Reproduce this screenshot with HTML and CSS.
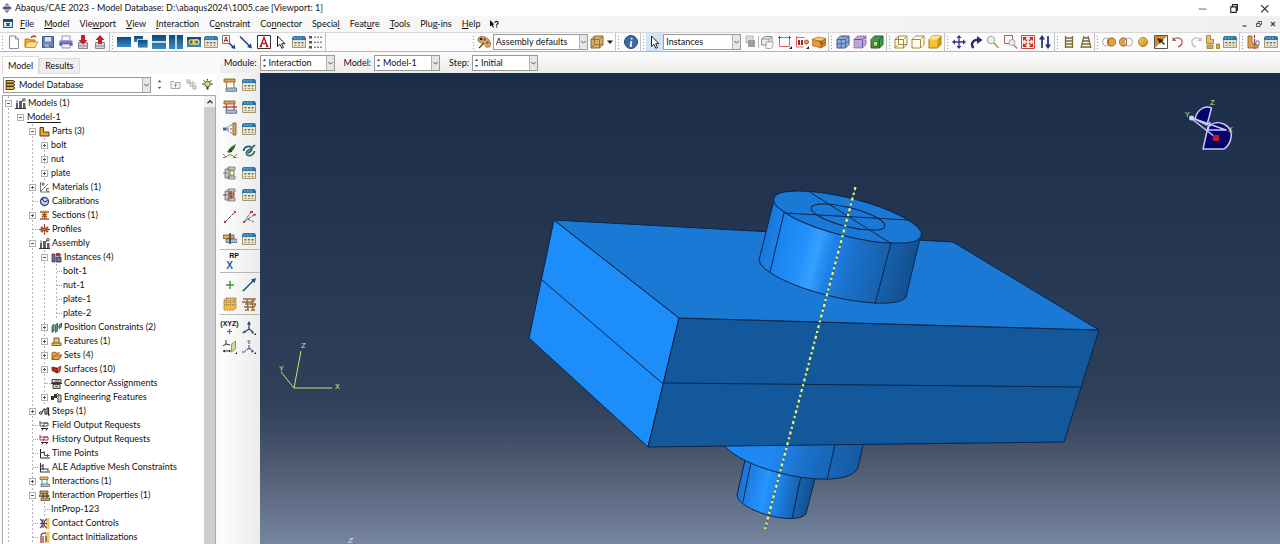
FILE: index.html
```html
<!DOCTYPE html>
<html lang="en">
<head>
<meta charset="utf-8">
<title>Abaqus/CAE 2023</title>
<link rel="stylesheet" href="styles.css">
</head>
<body>
<svg class="sprite" aria-hidden="true">
  <defs>
    <linearGradient id="g-win" x1="0" y1="0" x2="0" y2="1"><stop offset="0" stop-color="#0f4678"/><stop offset="1" stop-color="#3a8cc4"/></linearGradient>
    <linearGradient id="g-gold" x1="0" y1="0" x2="1" y2="1"><stop offset="0" stop-color="#ffd36a"/><stop offset="1" stop-color="#c9851a"/></linearGradient>
  </defs>
  <symbol id="logo" viewBox="0 0 12 12"><path d="M6 0l3 3H3zM6 12l3-3H3z" fill="#6a6f9c"/><path d="M0 6l3-2h6l3 2-3 2H3z" fill="#54598c"/><path d="M3 3h6v1H3zM3 8h6v1H3z" fill="#b9bcd8"/></symbol>
  <symbol id="mdi" viewBox="0 0 10 10"><path d="M.5.5h9v8h-9z" fill="#dce9f6" stroke="#1f4d7a"/><path d="M0 0h10v3H0z" fill="#1c4c7c"/><path d="M3 4h4v1H6l1 2H3l1-2H3z" fill="#1c4c7c"/></symbol>
  <symbol id="helpcur" viewBox="0 0 10 10"><path d="M0 0l5 5H3l1.500 3-1 .5L2 6 0 7z" fill="#111"/><path d="M5.500 3c0-2 3.500-2 3.500 0 0 1.500-1.700 1.300-1.700 3M7.300 7v1.400" fill="none" stroke="#111" stroke-width="1.300"/></symbol>
  <symbol id="chev" viewBox="0 0 8 8"><path d="M1.500 2.800L4 5.300l2.500-2.500" fill="none" stroke="#444" stroke-width="1"/></symbol>
  <symbol id="chev-up" viewBox="0 0 8 8"><path d="M1.500 5.200L4 2.700l2.500 2.500" fill="none" stroke="#333" stroke-width="1.300"/></symbol>
  <symbol id="spin" viewBox="0 0 6 12"><path d="M3 1l2 2.500H1zM3 11l2-2.500H1z" fill="#555"/></symbol>

  <symbol id="new" viewBox="0 0 14 14"><path d="M2.500 1h6l3 3v9.500h-9z" fill="#fff" stroke="#8e8e96"/><path d="M8.500 1v3h3" fill="#ddd" stroke="#8e8e96"/></symbol>
  <symbol id="open" viewBox="0 0 14 14"><path d="M1 12V4h4l1 1h5v7z" fill="#e9a93a" stroke="#b57814"/><path d="M1 12.500L4 7h10l-3 5.500z" fill="#ffe08a" stroke="#c58a1e" stroke-width=".8"/><path d="M7 3c1-2 3-2.500 5-1" stroke="#d33" fill="none" stroke-width="1.500"/></symbol>
  <symbol id="save" viewBox="0 0 14 14"><path d="M1.500 1.500h11v11h-11z" fill="#6d86b5" stroke="#3e5584"/><path d="M4 2h6v4.500H4z" fill="#d5dff0"/><path d="M4 9h6v3.500H4z" fill="#a3b1cc"/><path d="M8 9.500h1.500V12H8z" fill="#3e5584"/></symbol>
  <symbol id="print" viewBox="0 0 14 14"><path d="M3 1h8v5H3z" fill="#fff" stroke="#7b7bb0" stroke-width=".8"/><path d="M.5 5.500h13v5H.5z" fill="#7d7cc0"/><path d="M.5 8h13v2.500H.5z" fill="#5b5a9d"/><path d="M3 9h8v4H3z" fill="#eef" stroke="#7b7bb0" stroke-width=".8"/></symbol>
  <symbol id="import" viewBox="0 0 14 14"><path d="M2.500 7.500h9v6h-9z" fill="#d9d4d4" stroke="#8d8585"/><path d="M3 11h8" stroke="#8d8585"/><path d="M5 0h4v5h2.500L7 9.500 2.500 5H5z" fill="#c41e28"/></symbol>
  <symbol id="export" viewBox="0 0 14 14"><path d="M2.500 7.500h9v6h-9z" fill="#d9d4d4" stroke="#8d8585"/><path d="M3 11h8" stroke="#8d8585"/><path d="M5 9h4V5h2.500L7 0 2.500 5H5z" fill="#c41e28"/></symbol>
  <symbol id="win" viewBox="0 0 14 14"><path d="M0 2h14v10H0z" fill="url(#g-win)"/></symbol>
  <symbol id="cascade" viewBox="0 0 14 14"><path d="M0 1h9v6H0z" fill="url(#g-win)"/><path d="M3.500 4.500h10.500v8.500H3.500z" fill="url(#g-win)" stroke="#fff" stroke-width=".7"/></symbol>
  <symbol id="tileh" viewBox="0 0 14 14"><path d="M0 0h14v6.300H0zM0 7.700h14V14H0z" fill="url(#g-win)"/></symbol>
  <symbol id="tilev" viewBox="0 0 14 14"><path d="M0 0h6.300v14H0zM7.700 0H14v14H7.700z" fill="url(#g-win)"/></symbol>
  <symbol id="link" viewBox="0 0 14 14"><path d="M0 2h14v10H0z" fill="url(#g-win)"/><ellipse cx="5" cy="7" rx="3" ry="2.200" fill="none" stroke="#f3b32f" stroke-width="1.400"/><ellipse cx="9" cy="7" rx="3" ry="2.200" fill="none" stroke="#ffd56b" stroke-width="1.400"/></symbol>
  <symbol id="mgr" viewBox="0 0 14 14"><path d="M.5 4h13v8.500H.5z" fill="#ece4c8" stroke="#a89768"/><path d="M1.500 1h11l1.500 1.500V5H0V2.500z" fill="#2b78a8"/><path d="M2 3h1.500M5 3h1.500M8 3h1.500" stroke="#9fd2ee"/><path d="M2.500 7.800h2M6 7.800h2M9.500 7.800h2" stroke="#4f748c" stroke-width="1.600"/><path d="M2.500 10.500h2M6 10.500h2M9.500 10.500h2" stroke="#9a9a84"/></symbol>
  <symbol id="annot" viewBox="0 0 14 14"><path d="M.5.500h7v8h-7z" fill="#fff" stroke="#555" stroke-width=".8"/><path d="M2 7l2-5 2 5M2.700 5.500h2.600" stroke="#b3202b" fill="none"/><path d="M7 8l4 4" stroke="#1d3f86" stroke-width="1.500"/><path d="M13.500 14l-1-4.500-3.500 3.500z" fill="#1d3f86"/></symbol>
  <symbol id="arrow" viewBox="0 0 14 14"><path d="M1 1.500l9 9" stroke="#1d3f86" stroke-width="1.500"/><path d="M13 13.500L11.800 8.500 8 12z" fill="#1d3f86"/></symbol>
  <symbol id="text" viewBox="0 0 14 14"><path d="M.5.500h13v13H.5z" fill="#fff" stroke="#333"/><path d="M3.500 11.500L7 2.500l3.500 9M5 8.500h4M2.500 11.500h2.500M9 11.500h2.500" fill="none" stroke="#b3202b" stroke-width="1.500"/></symbol>
  <symbol id="cursor" viewBox="0 0 14 14"><path d="M3.500 1v10.500L6 9.300l1.800 4 1.700-.8-1.800-3.800h3.300z" fill="#fff" stroke="#222" stroke-width="1"/></symbol>
  <symbol id="list" viewBox="0 0 14 14"><path d="M0 1h3v2.500H0zM0 6h3v2.500H0zM0 11h3v2.500H0z" fill="#555"/><path d="M5 2.200h9M5 7.200h9M5 12.200h9" stroke="#555" stroke-dasharray="2 1"/></symbol>
  <symbol id="palette" viewBox="0 0 14 14"><path d="M1 4c1-4 8-3 11 1s2 8-3 7c-1-.5 0-2-1.500-3S0 8 1 4z" fill="#d9a765" stroke="#81571f" stroke-width=".7"/><circle cx="4" cy="4" r="1.300" fill="#222"/><circle cx="7.500" cy="4.500" r="1.200" fill="#c22"/><circle cx="10.500" cy="7.500" r="1.200" fill="#2a7a35"/><path d="M2 13l5-5" stroke="#5c3b14" stroke-width="1.300"/></symbol>
  <symbol id="cube-br" viewBox="0 0 14 14"><path d="M1 4.500L4.500 1H13v8.500L9.500 13H1z" fill="#d3b068" stroke="#8a6a2a"/><path d="M1 4.500h8.500V13M9.500 4.500L13 1M4.500 1v8.500H13M4.500 9.500L1 13" stroke="#8a6a2a" fill="none" stroke-width=".8"/></symbol>
  <symbol id="info" viewBox="0 0 14 14"><circle cx="7" cy="7" r="6.500" fill="#3a6aa8" stroke="#24497c"/><path d="M7.800 2.800l-.3 1.500M7.500 6l-1 5h1.500" stroke="#fff" stroke-width="1.700" fill="none"/></symbol>
  <symbol id="shapes" viewBox="0 0 14 14"><path d="M3 1h7v7H3z" fill="#ddd" stroke="#aaa" stroke-width=".8"/><path d="M5 5h7v7H5z" fill="#9d9d9d"/></symbol>
  <symbol id="cubegrey" viewBox="0 0 14 14"><path d="M.5 4L4 1.500h7V7L8 10H.5zM.5 4H8v6M8 4l3-2.500" fill="#eee" stroke="#8f8f8f"/><path d="M5 7h7v4l-2 2.500H5z" fill="#f5f5f5" stroke="#999" stroke-width=".8"/></symbol>
  <symbol id="selrect" viewBox="0 0 14 14"><path d="M1.500 2.500h10v9h-10z" fill="none" stroke="#cf6a6e"/><path d="M0 2.500h3M1.500 1v3M10 2.500h3M11.500 1v3" stroke="#b4343c"/><path d="M14 14v-3l-3 3z" fill="#222"/></symbol>
  <symbol id="selpts" viewBox="0 0 14 14"><path d="M1.500 2.500h8M1.500 1v11h7" fill="none" stroke="#cf6a6e"/><path d="M3 5h2v5H3zM6 5h2v5H6z" fill="#a82a1c"/><circle cx="11.500" cy="7" r="2" fill="#e9a54a" stroke="#a8531c"/><path d="M14 14v-3l-3 3z" fill="#222"/></symbol>
  <symbol id="box" viewBox="0 0 14 14"><path d="M0 4.500L6 2l8 1.500-5 3z" fill="#f7c873" stroke="#935a12" stroke-width=".6"/><path d="M0 4.500l9 2V13l-9-2.500z" fill="#e39a35" stroke="#935a12" stroke-width=".6"/><path d="M9 6.500l5-3V10l-5 3z" fill="#c97e20" stroke="#935a12" stroke-width=".6"/><path d="M7 6l4 3" stroke="#5c3b14"/></symbol>
  <symbol id="cube-blue" viewBox="0 0 14 14"><path d="M1 4.500L4.500 1H13v8.500L9.500 13H1z" fill="#8fabda" stroke="#3f5792"/><path d="M1 4.500h8.500V13M9.500 4.500L13 1M1 8.700h8.500L13 5.200M5.200 4.500V13M7 2.700L9 1" stroke="#3f5792" fill="none" stroke-width=".8"/></symbol>
  <symbol id="cube-pur" viewBox="0 0 14 14"><path d="M1 4.500L4.500 1H13v8.500L9.500 13H1z" fill="#b9a7dc" stroke="#a1426c" stroke-dasharray="1.500 1"/><path d="M1 4.500h8.500V13M9.500 4.500L13 1" stroke="#6d5aa6" fill="none"/></symbol>
  <symbol id="cube-grn" viewBox="0 0 14 14"><path d="M1 4.500L4.500 1H13v8.500L9.500 13H1z" fill="#43964d" stroke="#1e5c2a"/><path d="M3.500 6.500h4V11h-4z" fill="#e6d28a" stroke="#1e5c2a" stroke-width=".7"/><path d="M9.500 4.500L13 1M9.500 4.500V13" stroke="#1e5c2a"/></symbol>
  <symbol id="cube-wire" viewBox="0 0 14 14"><path d="M1 4.500L4.500 1H13v8.500L9.500 13H1zM1 4.500h8.500V13M9.500 4.500L13 1M4.500 1v8.500H13M4.500 9.500L1 13" stroke="#a88a35" fill="none"/></symbol>
  <symbol id="cube-hid" viewBox="0 0 14 14"><path d="M1 4.500L4.500 1H13v8.500L9.500 13H1zM1 4.500h8.500V13M9.500 4.500L13 1" stroke="#a88a35" fill="#fffdf3"/></symbol>
  <symbol id="cube-sol" viewBox="0 0 14 14"><path d="M1 4.500L4.500 1H13v8.500L9.500 13H1z" fill="#f5c431" stroke="#a17a10"/><path d="M1 4.500L4.500 1H13L9.500 4.500z" fill="#fde68e"/><path d="M9.500 4.500L13 1v8.500L9.500 13z" fill="#c9930f"/></symbol>
  <symbol id="pan" viewBox="0 0 14 14"><path d="M7 2v10M2 7h10" stroke="#34357f" stroke-width="1.300"/><path d="M7 0l2.500 3h-5zM7 14l2.500-3h-5zM0 7l3-2.500v5zM14 7l-3-2.500v5z" fill="#34357f"/></symbol>
  <symbol id="rotate" viewBox="0 0 14 14"><path d="M4.500 13C1 9 4 4.500 9 5" fill="none" stroke="#26286f" stroke-width="2.300"/><path d="M8 1l5.500 4L8 9z" fill="#26286f"/></symbol>
  <symbol id="mag" viewBox="0 0 14 14"><path d="M7.500 7.500L12.500 13" stroke="#b89c61" stroke-width="1.800"/><circle cx="5" cy="5" r="3.800" fill="#e9ecef" stroke="#a5a9ad"/></symbol>
  <symbol id="magbox" viewBox="0 0 14 14"><path d="M.5.500h8v8h-8z" fill="none" stroke="#a55a68"/><path d="M9.500 9.500L13 13.500" stroke="#b89c61" stroke-width="1.800"/><circle cx="8" cy="7.500" r="3" fill="#e9ecef" stroke="#a5a9ad"/></symbol>
  <symbol id="fit" viewBox="0 0 14 14"><path d="M.5.500h13v13H.5z" fill="#fde9e6" stroke="#cf4338"/><path d="M2 2h4L2 6zM12 2v4L8 2zM2 12V8l4 4zM12 12H8l4-4z" fill="#c6281f"/><path d="M3 3l3 3M11 3L8 6M3 11l3-3M11 11L8 8" stroke="#c6281f" stroke-width="1.300"/></symbol>
  <symbol id="updown" viewBox="0 0 14 14"><path d="M4 3v10M10 1v10" stroke="#26286f" stroke-width="1.700"/><path d="M4 0l3 4.500H1zM10 14l3-4.500H7z" fill="#26286f"/></symbol>
  <symbol id="ladder" viewBox="0 0 14 14"><path d="M3.500 1v12M10.500 1v12M3 3h8M3 6h8M3 9h8M3 12h8" stroke="#7c6a39" stroke-width="1.300"/></symbol>
  <symbol id="ladder2" viewBox="0 0 14 14"><path d="M5 1L2 13M9 1l3 12M4.500 3h5M4 6h6M3 9h8M2 12h10" stroke="#7c6a39" stroke-width="1.300"/></symbol>
  <symbol id="venn1" viewBox="0 0 14 14"><circle cx="4.500" cy="7" r="4" fill="#fff" stroke="#9a8d6e" stroke-width=".8"/><circle cx="9.500" cy="7" r="4.200" fill="#e3a13a" stroke="#8a5c12" stroke-width=".8"/><path d="M6.500 4v6" stroke="#8a5c12" stroke-width=".8"/></symbol>
  <symbol id="venn2" viewBox="0 0 14 14"><circle cx="4.500" cy="7" r="4.200" fill="#e3a13a" stroke="#8a5c12" stroke-width=".8"/><circle cx="9.500" cy="7" r="4" fill="#fff" stroke="#8c93a6" stroke-width=".8"/><path d="M7.500 4v6" stroke="#8a5c12" stroke-width=".8"/></symbol>
  <symbol id="ball" viewBox="0 0 14 14"><circle cx="7" cy="7" r="4.500" fill="url(#g-gold)" stroke="#a56c14" stroke-width=".8"/></symbol>
  <symbol id="pick" viewBox="0 0 14 14"><path d="M.5.500h13v13H.5z" fill="#fff" stroke="#555"/><path d="M1 1h12L1 13z" fill="#d98a25"/><path d="M3 3l7 2-2 1 3 3-1 1-3-3-1 2z" fill="#222"/></symbol>
  <symbol id="undo" viewBox="0 0 14 14"><path d="M2.500 4.500C7 1 12 4 11 8c-.5 2-2 3.500-4 4" fill="none" stroke="#a15a5c" stroke-width="1.200"/><path d="M1.500 2v4h4z" fill="#a15a5c"/></symbol>
  <symbol id="redo" viewBox="0 0 14 14"><path d="M11.500 4.500C7 1 2 4 3 8c.5 2 2 3.500 4 4" fill="none" stroke="#b9b9b9" stroke-width="1.200"/><path d="M12.500 2v4h-4z" fill="#b9b9b9"/></symbol>
  <symbol id="tree" viewBox="0 0 14 14"><path d="M.5.500h4v4h3v4h-7z" fill="#e2c271" stroke="#9a7a2a" stroke-width=".8"/><path d="M1 10h6v3.500H1zM10.500 9h3v4.500h-3z" fill="#d9a54a" stroke="#9a7a2a" stroke-width=".8"/></symbol>
  <symbol id="cut" viewBox="0 0 14 14"><path d="M1 1h4v7h6v5H1z" fill="#d9a050" stroke="#8a5c22" stroke-width=".8"/><path d="M9 6h3v4H9z" fill="#fff" stroke="#5a68a8" stroke-width=".9"/><path d="M7.500 0v14" stroke="#c2262c" stroke-width="1.200" stroke-dasharray="3 1"/></symbol>

  <symbol id="db" viewBox="0 0 11 11"><path d="M1 1.500h7l2 1.500-2 1H1zM1 4.500h7l2 1.500-2 1H1zM1 7.500h7l2 1.500-2 1.500H1z" fill="#e0b440" stroke="#3b2d0b" stroke-width=".9"/></symbol>
  <symbol id="folderup" viewBox="0 0 11 11"><path d="M1 2.500h3l1 1h5v6H1z" fill="#f4f4f4" stroke="#a9a9a9"/><path d="M5.500 8.500V5M4 6.300L5.500 5 7 6.300" fill="none" stroke="#999"/></symbol>
  <symbol id="chain" viewBox="0 0 11 11"><path d="M1 1h3v3H1zM4 4h3v3H4zM7 7h3v3H7z" fill="#eee" stroke="#a9a9a9"/><path d="M6 2l4 3" stroke="#bbb"/></symbol>
  <symbol id="bulb" viewBox="0 0 11 11"><path d="M5.500 0v1.500M0 5h2M9 5h2M1.500 1.500l1.500 1M9.500 1.500L8 2.500" stroke="#333"/><circle cx="5.500" cy="5" r="2.800" fill="#d6dd6a" stroke="#4b5215" stroke-width=".9"/><path d="M4.500 8h2v2.500h-2z" fill="#333"/></symbol>

  <symbol id="t-asm" viewBox="0 0 11 11"><path d="M1 5h2v5H1zM4 3h3v7H4zM8 5h2.500v5H8z" fill="#556070"/><path d="M2 2.500v2M8.500 1l-2 3" stroke="#333"/><circle cx="9" cy="1.800" r="1.300" fill="#fff" stroke="#222" stroke-width=".8"/><path d="M0 10.500h11" stroke="#333"/></symbol>
  <symbol id="t-part" viewBox="0 0 11 11"><path d="M1 1.500h3.500v4.500H10v4H1z" fill="#dfa83a" stroke="#5a3d0b"/></symbol>
  <symbol id="t-mat" viewBox="0 0 11 11"><path d="M1.500 0v10H11M2 9l7-7" stroke="#777" fill="none"/><path d="M3 1h2v2H3zM10 6.500H7.500v2.500H10" stroke="#444" stroke-width=".8" fill="none"/></symbol>
  <symbol id="t-cal" viewBox="0 0 11 11"><circle cx="5.500" cy="5.500" r="4" fill="#c9d4ee" stroke="#3b4780" stroke-width="1.400"/><path d="M5.500 6L3 2.500M5.500 6l3-1.500" stroke="#222"/></symbol>
  <symbol id="t-sec" viewBox="0 0 11 11"><path d="M1 2h9M1 9h9M5.500 2v7M3 4l5 3M8 4L3 7" stroke="#9a5a24" stroke-width="1.600"/><path d="M3 1h5" stroke="#e3a13a"/></symbol>
  <symbol id="t-prof" viewBox="0 0 11 11"><path d="M5.500 0v11M0 5.500h11" stroke="#9f3c20"/><path d="M2 3h2v5H2zM7 3h2v5H7zM4 4.500h3v2H4z" fill="#cf7446" stroke="#8e3d1d" stroke-width=".6"/></symbol>
  <symbol id="t-inst" viewBox="0 0 11 11"><path d="M1 2h3v8H1zM5 5h5v5H5z" fill="#6e7896" stroke="#2f3550" stroke-width=".8"/><path d="M5 1h4v3H5z" fill="#b43444"/><path d="M7 7l3-5" stroke="#b43444"/></symbol>
  <symbol id="t-pos" viewBox="0 0 11 11"><path d="M1 4l2-2v7l-2 1.500zM4.500 3l2-2v8l-2 1.500zM8 3l2.500-2v4L8 6.500z" fill="#5c9a76" stroke="#22553a" stroke-width=".8"/></symbol>
  <symbol id="t-feat" viewBox="0 0 11 11"><path d="M1 9.500V7h2V2h5v5h2v2.500z" fill="#e5c176" stroke="#7c5c20"/><path d="M3 7h5" stroke="#7c5c20"/></symbol>
  <symbol id="t-set" viewBox="0 0 11 11"><path d="M1 9.500V3l3-1 1 1h4" fill="#f0b840" stroke="#8e5a14" stroke-width=".9"/><path d="M1 9.500L3.500 5H11L8 9.500z" fill="#e79b3a" stroke="#a5421c" stroke-width=".9"/></symbol>
  <symbol id="t-surf" viewBox="0 0 11 11"><path d="M1 3l5 1v5L1 6.500z" fill="#b4281e" stroke="#64140e" stroke-width=".7"/><path d="M6.500 4L10 2 9 7.500 6.500 9z" fill="#d25a34" stroke="#64140e" stroke-width=".7"/></symbol>
  <symbol id="t-conn" viewBox="0 0 11 11"><path d="M1 1.500h9v3H1zM2 6.500h7v4H2z" fill="#cfd6c4" stroke="#333" stroke-width=".9"/><path d="M0 5.500h11" stroke="#333"/><path d="M4 3h4M4 8.500h3" stroke="#76602a"/></symbol>
  <symbol id="t-eng" viewBox="0 0 11 11"><path d="M0 4h3v4H0zM3 2h3v4H3z" fill="#333"/><path d="M7 3h3v7H7z" fill="#e8d8a0" stroke="#333" stroke-width=".9"/><path d="M6 1l2 2" stroke="#333"/></symbol>
  <symbol id="t-step" viewBox="0 0 11 11"><circle cx="1.800" cy="7" r="1.300" fill="#fff" stroke="#222"/><path d="M3 6l2-3h1v5h2V2h1.500v7H11" fill="none" stroke="#222" stroke-width="1.100"/></symbol>
  <symbol id="t-field" viewBox="0 0 11 11"><path d="M1 1v5h4V3h4M1 3h8v3H3" fill="none" stroke="#555"/><path d="M2 8.500h7M3 10.500l1-1.500M7 10.500l1-1.500" stroke="#222"/></symbol>
  <symbol id="t-hist" viewBox="0 0 11 11"><path d="M1 1v5h4V3h4M1 3h8v3H3" fill="none" stroke="#a33a4a"/><path d="M2 8.500h7M3 10.500l1-1.500M7 10.500l1-1.500" stroke="#222"/></symbol>
  <symbol id="t-time" viewBox="0 0 11 11"><path d="M1.500 1v9H11" fill="none" stroke="#222"/><path d="M1.500 4.500h4v3h5M5 3v3M8.500 6v3" fill="none" stroke="#555"/></symbol>
  <symbol id="t-ale" viewBox="0 0 11 11"><path d="M1.500 1v9H11M4 2v6M1.500 4H4M1.500 7H9v2" fill="none" stroke="#334" stroke-width="1.100"/></symbol>
  <symbol id="t-int" viewBox="0 0 11 11"><path d="M1 1h8v2.500H1z" fill="#e6bc62" stroke="#755619" stroke-width=".7"/><path d="M3 3.500V8M8 3.500V8" stroke="#3a9a8a"/><path d="M2 8h8.500v2.500H2z" fill="#b7c6d4" stroke="#4c5d70" stroke-width=".7"/></symbol>
  <symbol id="t-intp" viewBox="0 0 11 11"><path d="M1 1h8v2.500H1zM0 5h10v1.500H0z" fill="#d6a33d" stroke="#4a3710" stroke-width=".7"/><path d="M4 3.500V8M8 3.500V8" stroke="#333"/><path d="M2 8h8.500v2.500H2z" fill="#c4b377" stroke="#4a3710" stroke-width=".7"/></symbol>
  <symbol id="t-cc" viewBox="0 0 11 11"><path d="M7 0h3.500v11H7z" fill="#e8c86a"/><path d="M1 1l2 2v5l-2 2M4 1v9M7.500 1l-2 2v5l2 2M1 5.500h7" fill="none" stroke="#5e3f70" stroke-width="1.100"/></symbol>
  <symbol id="t-ci" viewBox="0 0 11 11"><path d="M6 0h4.500v11H6z" fill="#e8c86a"/><path d="M2 4v7M4 4v7M2 4c0-3 3-3 5-3" fill="none" stroke="#8e2f2a" stroke-width="1.200"/><path d="M7 4v6" stroke="#4a3710"/></symbol>

  <symbol id="b-int" viewBox="0 0 14 14"><path d="M1 1h11v3H1z" fill="#dca65a" stroke="#7d5418" stroke-width=".8"/><path d="M3.500 4v6M11 4v6" stroke="#a8872e" stroke-width="1.200"/><path d="M3 10h10.500v3.300H3z" fill="#a9bcd4" stroke="#516782" stroke-width=".8"/></symbol>
  <symbol id="b-intp" viewBox="0 0 14 14"><path d="M1 1h11v3H1z" fill="#dca65a" stroke="#7d5418" stroke-width=".8"/><path d="M3.500 4v6M11 4v6" stroke="#8a5a2e" stroke-width="1.200"/><path d="M0 7h14" stroke="#c2262c" stroke-width="1.300"/><path d="M3 10h10.500v3.300H3z" fill="#a9bcd4" stroke="#516782" stroke-width=".8"/></symbol>
  <symbol id="b-cons" viewBox="0 0 14 14"><path d="M10 1h3v12h-3z" fill="#dca65a" stroke="#7d5418" stroke-width=".8"/><path d="M2 7l8-5M2 7l8 5M1 7h8" stroke="#555" stroke-width=".9" stroke-dasharray="2 1" fill="none"/><path d="M0 5.500h3.500v3H0z" fill="#3c6f9c"/></symbol>
  <symbol id="b-find" viewBox="0 0 14 14"><path d="M4 8l4-5 5-3-2 5-4 4z" fill="#2d6b2b"/><path d="M6 5l3 3" stroke="#111"/><path d="M0 10l3 3 2-2h4l2 2 3-3M0 13.500h3M10 13.500h4" stroke="#8a8540" fill="none"/></symbol>
  <symbol id="b-swirl" viewBox="0 0 14 14"><path d="M1.500 7C2 2.500 8 1 9.500 4c.8 2-1 4-4 5" fill="none" stroke="#2d5878" stroke-width="1.800"/><path d="M12.500 7c-.5 4.500-6.500 6-8 3-.8-2 1-4 4-5L13 1" fill="none" stroke="#3f7068" stroke-width="1.800"/></symbol>
  <symbol id="b-conn" viewBox="0 0 14 14"><path d="M2 3h4v9H2zM5 1h7v3H5zM5 10h7v3H5z" fill="#c3c7cc" stroke="#6c7076" stroke-width=".8"/><path d="M7 5h4v4H7z" fill="#fff" stroke="#8a7a2e"/><path d="M0 7h4" stroke="#6c7076"/></symbol>
  <symbol id="b-conn2" viewBox="0 0 14 14"><path d="M2 3h4v9H2zM5 1h7v3H5zM5 10h7v3H5z" fill="#c3c7cc" stroke="#6c7076" stroke-width=".8"/><path d="M6 5h5v4H6z" fill="#e58c43" stroke="#9c4a16"/><path d="M0 7h4M8 3v8" stroke="#6c4040"/></symbol>
  <symbol id="b-line" viewBox="0 0 14 14"><path d="M1.500 12.500l11-11" stroke="#444" stroke-dasharray="4 1"/><circle cx="2" cy="12" r="1.200" fill="#b04060"/><circle cx="12" cy="2" r="1.200" fill="#b04060"/></symbol>
  <symbol id="b-fork" viewBox="0 0 14 14"><path d="M1.500 12.500l8-11M1.500 12.500L13 4M5 9l7 3" stroke="#555" stroke-dasharray="4 1" stroke-width=".9"/><path d="M8 1h3v2H8zM11 4h3v1.500h-3zM1 11h2v2H1z" fill="#b04060"/></symbol>
  <symbol id="b-fast" viewBox="0 0 14 14"><path d="M0 3h11v3.500H0z" fill="#dca65a" stroke="#7d5418" stroke-width=".8"/><path d="M3 7h11v3.500H3z" fill="#a9bcd4" stroke="#516782" stroke-width=".8"/><path d="M7 1v11" stroke="#333" stroke-width="1.400"/></symbol>
  <symbol id="b-plus" viewBox="0 0 14 14"><path d="M7 3v8M3 7h8" stroke="#35983d" stroke-width="1.400"/></symbol>
  <symbol id="b-axis" viewBox="0 0 14 14"><path d="M1 13L12 2" stroke="#1d4a78" stroke-width="1.500"/><path d="M14 0l-1.500 5L9 1.500z" fill="#1d4a78"/><path d="M0 12.500h3" stroke="#35983d"/></symbol>
  <symbol id="b-grid" viewBox="0 0 14 14"><path d="M1 3l2-2h10v10l-2 2H1z" fill="#f1bd3f" stroke="#c08b1c" stroke-width=".8"/><path d="M4 1v8M7.500 1v8M11 1v8M1 4h12M1 8h12" stroke="#8a7a5a" stroke-dasharray="1 1"/></symbol>
  <symbol id="b-hash" viewBox="0 0 14 14"><path d="M1 2h12l-2 3H0M3 7h11l-2 3H2M5 2l1 11M10 2l1 11M3 13h4M9 13h4" fill="none" stroke="#9a6a3a" stroke-width="1.300"/></symbol>
  <symbol id="b-triad" viewBox="0 0 14 14"><path d="M7 8V2M7 8l-4.500 3M7 8l4 3" stroke="#2a4a68" stroke-width="1.300"/><path d="M7 0l2 3.500H5zM0 12.500l2-3 2 2zM12 13l-3-1 2-2z" fill="#2a4a68"/><path d="M14 14v-2l-2 2z" fill="#111"/></symbol>
  <symbol id="b-triad2" viewBox="0 0 14 14"><path d="M7 8V2M7 8l-5 4M7 8l4 3" stroke="#5a5a90" stroke-dasharray="3 1" stroke-width="1.200"/><path d="M5.500 0h3v2.500h-3zM0 11h3v2H0z" fill="#a99ab8"/><path d="M9 10l3 1-2 2z" fill="#36427a"/><path d="M14 14v-2l-2 2z" fill="#111"/></symbol>
  <symbol id="b-plane" viewBox="0 0 14 14"><path d="M8.500 4L12.500 1v8l-4 3z" fill="#d6d68e" stroke="#83834a" stroke-width=".8"/><path d="M3 0v4l-3 2M3 4l4 1" stroke="#333" fill="none"/><path d="M0 11h7" stroke="#333"/><path d="M0 11l2-1.500v3zM8 11L6 9.500v3z" fill="#333"/><path d="M14 14v-2l-2 2z" fill="#111"/></symbol>
</svg>

<header class="titlebar">
  <svg class="titlebar-logo"><use href="#logo"/></svg>
  <h1 class="titlebar-text">Abaqus/CAE 2023 - Model Database: D:\abaqus2024\1005.cae [Viewport: 1]</h1>
  <div class="winctl">
    <button aria-label="Minimize"><svg viewBox="0 0 10 10"><path d="M1.500 5.500h7" stroke="#777"/></svg></button>
    <button aria-label="Restore"><svg viewBox="0 0 10 10"><path d="M2.500 3.500h5v5h-5zM4 3V1.500h4.500v5H7.500" fill="none" stroke="#222"/></svg></button>
    <button aria-label="Close"><svg viewBox="0 0 10 10"><path d="M2 2l6.500 6.500M8.500 2L2 8.500" stroke="#222"/></svg></button>
  </div>
</header>

<nav class="menubar" aria-label="Main menu">
  <svg class="menubar-icon"><use href="#mdi"/></svg>
  <button><u>F</u>ile</button>
  <button><u>M</u>odel</button>
  <button>Vie<u>w</u>port</button>
  <button><u>V</u>iew</button>
  <button><u>I</u>nteraction</button>
  <button>C<u>o</u>nstraint</button>
  <button>Co<u>n</u>nector</button>
  <button>Specia<u>l</u></button>
  <button>Feat<u>u</u>re</button>
  <button><u>T</u>ools</button>
  <button>Plu<u>g</u>-ins</button>
  <button><u>H</u>elp</button>
  <button class="menubar-help" aria-label="Context help"><svg><use href="#helpcur"/></svg></button>
  <div class="mdictl">
    <button aria-label="Minimize viewport"><svg viewBox="0 0 8 8"><path d="M1.500 6h4" stroke="#444" stroke-width="1.200"/></svg></button>
    <button aria-label="Restore viewport"><svg viewBox="0 0 8 8"><path d="M1.500 3.500h3.500v3H1.500zM3 3V1.500h3.500v3H5" fill="none" stroke="#444" stroke-width=".9"/></svg></button>
    <button aria-label="Close viewport"><svg viewBox="0 0 8 8"><path d="M2 2l4 4M6 2L2 6" stroke="#444" stroke-width="1.300"/></svg></button>
  </div>
</nav>

<div class="toolbar" role="toolbar" aria-label="Tools">
  <div class="group group-file">
    <button aria-label="New"><svg><use href="#new"/></svg></button>
    <button aria-label="Open"><svg><use href="#open"/></svg></button>
    <button aria-label="Save"><svg><use href="#save"/></svg></button>
    <button aria-label="Print"><svg><use href="#print"/></svg></button>
    <button aria-label="Import"><svg><use href="#import"/></svg></button>
    <button aria-label="Export"><svg><use href="#export"/></svg></button>
  </div>
  <div class="group group-windows">
    <button aria-label="Create viewport"><svg><use href="#win"/></svg></button>
    <button aria-label="Cascade"><svg><use href="#cascade"/></svg></button>
    <button aria-label="Tile horizontally"><svg><use href="#tileh"/></svg></button>
    <button aria-label="Tile vertically"><svg><use href="#tilev"/></svg></button>
    <button aria-label="Link viewports"><svg><use href="#link"/></svg></button>
    <button aria-label="Linked viewports manager"><svg><use href="#mgr"/></svg></button>
    <button aria-label="Edit annotation"><svg><use href="#annot"/></svg></button>
    <button aria-label="Create arrow"><svg><use href="#arrow"/></svg></button>
    <button aria-label="Create text"><svg><use href="#text"/></svg></button>
    <button aria-label="Select annotation"><svg><use href="#cursor"/></svg></button>
    <button aria-label="Annotation manager"><svg><use href="#mgr"/></svg></button>
    <button aria-label="Annotation options"><svg><use href="#list"/></svg></button>
  </div>
  <div class="group group-colors">
    <button aria-label="Color code"><svg><use href="#palette"/></svg></button>
    <div class="combo combo-colors">
      <select aria-label="Color mapping"><option>Assembly defaults</option></select>
      <svg class="combo-arrow"><use href="#chev"/></svg>
    </div>
    <button aria-label="Translucency"><svg><use href="#cube-br"/></svg></button>
    <button class="drop" aria-label="Translucency options"><svg viewBox="0 0 6 6"><path d="M0 1.500h6L3 5z" fill="#222"/></svg></button>
  </div>
  <div class="group group-info">
    <button aria-label="Query"><svg><use href="#info"/></svg></button>
  </div>
  <div class="group group-select">
    <button class="active" aria-label="Select"><svg><use href="#cursor"/></svg></button>
    <div class="combo combo-select">
      <select aria-label="Selection filter"><option>Instances</option></select>
      <svg class="combo-arrow"><use href="#chev"/></svg>
    </div>
    <button aria-label="Selection options"><svg><use href="#shapes"/></svg></button>
    <span class="rule"></span>
    <button aria-label="Highlight"><svg><use href="#cubegrey"/></svg></button>
    <button aria-label="Drag shape"><svg><use href="#selrect"/></svg></button>
    <button aria-label="Drag scope"><svg><use href="#selpts"/></svg></button>
    <button aria-label="Select from exterior"><svg><use href="#box"/></svg></button>
  </div>
  <div class="group group-three">
    <button aria-label="Show mesh"><svg><use href="#cube-blue"/></svg></button>
    <button aria-label="Show seeds"><svg><use href="#cube-pur"/></svg></button>
    <button aria-label="Show reference"><svg><use href="#cube-grn"/></svg></button>
  </div>
  <div class="group group-three">
    <button aria-label="Wireframe"><svg><use href="#cube-wire"/></svg></button>
    <button aria-label="Hidden"><svg><use href="#cube-hid"/></svg></button>
    <button aria-label="Shaded"><svg><use href="#cube-sol"/></svg></button>
  </div>
  <div class="group group-file">
    <button aria-label="Pan"><svg><use href="#pan"/></svg></button>
    <button aria-label="Rotate"><svg><use href="#rotate"/></svg></button>
    <button aria-label="Magnify"><svg><use href="#mag"/></svg></button>
    <button aria-label="Box zoom"><svg><use href="#magbox"/></svg></button>
    <button aria-label="Fit view"><svg><use href="#fit"/></svg></button>
    <button aria-label="Cycle views"><svg><use href="#updown"/></svg></button>
  </div>
  <div class="group group-two">
    <button aria-label="Parallel"><svg><use href="#ladder"/></svg></button>
    <button aria-label="Perspective"><svg><use href="#ladder2"/></svg></button>
  </div>
  <div class="group group-display">
    <button aria-label="Replace"><svg><use href="#venn1"/></svg></button>
    <button aria-label="Remove"><svg><use href="#venn2"/></svg></button>
    <button aria-label="Show all"><svg><use href="#ball"/></svg></button>
    <button aria-label="Pick display"><svg><use href="#pick"/></svg></button>
    <button aria-label="Undo"><svg><use href="#undo"/></svg></button>
    <button aria-label="Redo"><svg><use href="#redo"/></svg></button>
    <button aria-label="Display group"><svg><use href="#tree"/></svg></button>
    <button aria-label="Display group manager"><svg><use href="#mgr"/></svg></button>
  </div>
  <div class="group group-two group-last">
    <button aria-label="View cut"><svg><use href="#cut"/></svg></button>
    <button aria-label="View cut manager"><svg><use href="#mgr"/></svg></button>
  </div>
</div>

<main class="workspace">
  <aside class="side">
    <div class="tabs" role="tablist">
      <button class="tab tab-on" role="tab" aria-selected="true">Model</button>
      <button class="tab" role="tab" aria-selected="false">Results</button>
    </div>
    <div class="dbrow">
      <div class="combo combo-db">
        <svg class="combo-icon"><use href="#db"/></svg>
        <select aria-label="Database"><option>Model Database</option></select>
        <svg class="combo-arrow"><use href="#chev"/></svg>
      </div>
      <div class="dbtools">
        <button aria-label="Step through"><svg><use href="#spin"/></svg></button>
        <button aria-label="Up one level"><svg><use href="#folderup"/></svg></button>
        <button aria-label="Filter"><svg><use href="#chain"/></svg></button>
        <button aria-label="Tip"><svg><use href="#bulb"/></svg></button>
      </div>
    </div>
    <div class="treebox">
      <ul class="tree">
        <li><div class="row"><button class="exp minus" aria-label="Collapse"></button><svg><use href="#t-asm"/></svg><span>Models (1)</span></div>
          <ul class="solo">
            <li><div class="row"><button class="exp minus" aria-label="Collapse"></button><span class="current">Model-1</span></div>
              <ul>
                <li><div class="row"><button class="exp minus" aria-label="Collapse"></button><svg><use href="#t-part"/></svg><span>Parts (3)</span></div>
                  <ul>
                    <li><div class="row"><button class="exp" aria-label="Expand"></button><span>bolt</span></div></li>
                    <li><div class="row"><button class="exp" aria-label="Expand"></button><span>nut</span></div></li>
                    <li><div class="row"><button class="exp" aria-label="Expand"></button><span>plate</span></div></li>
                  </ul>
                </li>
                <li><div class="row"><button class="exp" aria-label="Expand"></button><svg><use href="#t-mat"/></svg><span>Materials (1)</span></div></li>
                <li><div class="row leaf"><svg><use href="#t-cal"/></svg><span>Calibrations</span></div></li>
                <li><div class="row"><button class="exp" aria-label="Expand"></button><svg><use href="#t-sec"/></svg><span>Sections (1)</span></div></li>
                <li><div class="row leaf"><svg><use href="#t-prof"/></svg><span>Profiles</span></div></li>
                <li><div class="row"><button class="exp minus" aria-label="Collapse"></button><svg><use href="#t-asm"/></svg><span>Assembly</span></div>
                  <ul>
                    <li><div class="row"><button class="exp minus" aria-label="Collapse"></button><svg><use href="#t-inst"/></svg><span>Instances (4)</span></div>
                      <ul>
                        <li><div class="row leaf"><span>bolt-1</span></div></li>
                        <li><div class="row leaf"><span>nut-1</span></div></li>
                        <li><div class="row leaf"><span>plate-1</span></div></li>
                        <li><div class="row leaf"><span>plate-2</span></div></li>
                      </ul>
                    </li>
                    <li><div class="row"><button class="exp" aria-label="Expand"></button><svg><use href="#t-pos"/></svg><span>Position Constraints (2)</span></div></li>
                    <li><div class="row"><button class="exp" aria-label="Expand"></button><svg><use href="#t-feat"/></svg><span>Features (1)</span></div></li>
                    <li><div class="row"><button class="exp" aria-label="Expand"></button><svg><use href="#t-set"/></svg><span>Sets (4)</span></div></li>
                    <li><div class="row"><button class="exp" aria-label="Expand"></button><svg><use href="#t-surf"/></svg><span>Surfaces (10)</span></div></li>
                    <li><div class="row leaf"><svg><use href="#t-conn"/></svg><span>Connector Assignments</span></div></li>
                    <li><div class="row"><button class="exp" aria-label="Expand"></button><svg><use href="#t-eng"/></svg><span>Engineering Features</span></div></li>
                  </ul>
                </li>
                <li><div class="row"><button class="exp" aria-label="Expand"></button><svg><use href="#t-step"/></svg><span>Steps (1)</span></div></li>
                <li><div class="row leaf"><svg><use href="#t-field"/></svg><span>Field Output Requests</span></div></li>
                <li><div class="row leaf"><svg><use href="#t-hist"/></svg><span>History Output Requests</span></div></li>
                <li><div class="row leaf"><svg><use href="#t-time"/></svg><span>Time Points</span></div></li>
                <li><div class="row leaf"><svg><use href="#t-ale"/></svg><span>ALE Adaptive Mesh Constraints</span></div></li>
                <li><div class="row"><button class="exp" aria-label="Expand"></button><svg><use href="#t-int"/></svg><span>Interactions (1)</span></div></li>
                <li><div class="row"><button class="exp minus" aria-label="Collapse"></button><svg><use href="#t-intp"/></svg><span>Interaction Properties (1)</span></div>
                  <ul>
                    <li><div class="row leaf"><span>IntProp-123</span></div></li>
                  </ul>
                </li>
                <li><div class="row leaf"><svg><use href="#t-cc"/></svg><span>Contact Controls</span></div></li>
                <li><div class="row leaf"><svg><use href="#t-ci"/></svg><span>Contact Initializations</span></div></li>
              </ul>
            </li>
          </ul>
        </li>
      </ul>
      <div class="scroll"><button aria-label="Scroll up"><svg><use href="#chev-up"/></svg></button></div>
    </div>
  </aside>

  <section class="stage">
    <div class="context">
      <label for="module">Module:</label>
      <div class="combo combo-module">
        <svg class="combo-spin"><use href="#spin"/></svg>
        <select id="module"><option>Interaction</option></select>
        <svg class="combo-arrow"><use href="#chev"/></svg>
      </div>
      <label for="model">Model:</label>
      <div class="combo combo-ctx">
        <svg class="combo-spin"><use href="#spin"/></svg>
        <select id="model"><option>Model-1</option></select>
        <svg class="combo-arrow"><use href="#chev"/></svg>
      </div>
      <label for="step">Step:</label>
      <div class="combo combo-ctx">
        <svg class="combo-spin"><use href="#spin"/></svg>
        <select id="step"><option>Initial</option></select>
        <svg class="combo-arrow"><use href="#chev"/></svg>
      </div>
    </div>
    <div class="canvasrow">
      <div class="toolbox" role="toolbar" aria-label="Interaction module">
        <div class="pairs pairs-tall">
          <button aria-label="Create interaction"><svg><use href="#b-int"/></svg></button>
          <button aria-label="Interaction manager"><svg><use href="#mgr"/></svg></button>
          <button aria-label="Create interaction property"><svg><use href="#b-intp"/></svg></button>
          <button aria-label="Interaction property manager"><svg><use href="#mgr"/></svg></button>
          <button aria-label="Create constraint"><svg><use href="#b-cons"/></svg></button>
          <button aria-label="Constraint manager"><svg><use href="#mgr"/></svg></button>
          <button aria-label="Find contact pairs"><svg><use href="#b-find"/></svg></button>
          <button aria-label="Create cyclic"><svg><use href="#b-swirl"/></svg></button>
          <button aria-label="Create connector assignment"><svg><use href="#b-conn"/></svg></button>
          <button aria-label="Connector assignment manager"><svg><use href="#mgr"/></svg></button>
          <button aria-label="Create connector section"><svg><use href="#b-conn2"/></svg></button>
          <button aria-label="Connector section manager"><svg><use href="#mgr"/></svg></button>
          <button aria-label="Create wire"><svg><use href="#b-line"/></svg></button>
          <button aria-label="Modify wire"><svg><use href="#b-fork"/></svg></button>
          <button aria-label="Create fastener"><svg><use href="#b-fast"/></svg></button>
          <button aria-label="Fastener manager"><svg><use href="#mgr"/></svg></button>
        </div>
        <div class="pairs">
          <button class="rp" aria-label="Create reference point"><span class="rp-text">RP</span><span class="rp-x">X</span></button>
        </div>
        <div class="pairs">
          <button aria-label="Create datum point"><svg><use href="#b-plus"/></svg></button>
          <button aria-label="Create datum axis"><svg><use href="#b-axis"/></svg></button>
          <button aria-label="Create datum plane"><svg><use href="#b-grid"/></svg></button>
          <button aria-label="Create partition"><svg><use href="#b-hash"/></svg></button>
        </div>
        <div class="pairs pairs-last">
          <button class="xyz" aria-label="Datum from coordinates"><span>(XYZ)</span><svg viewBox="0 0 7 7"><path d="M3.500 1v5M1 3.500h5" stroke="#1f7fa0" stroke-width="1.200"/></svg></button>
          <button aria-label="Datum system"><svg><use href="#b-triad"/></svg></button>
          <button aria-label="Offset plane"><svg><use href="#b-plane"/></svg></button>
          <button aria-label="Datum rotate"><svg><use href="#b-triad2"/></svg></button>
        </div>
      </div>
      <div class="viewport">
        <svg class="scene" viewBox="260 73 1020 471" preserveAspectRatio="xMidYMid slice" role="img" aria-label="Bolted plate assembly">
          <defs>
            <linearGradient id="g-head" gradientUnits="userSpaceOnUse" x1="766" y1="230" x2="912" y2="266">
              <stop offset="0" stop-color="#1976d6"/><stop offset=".12" stop-color="#1b86f2"/><stop offset=".27" stop-color="#2490fc"/><stop offset=".36" stop-color="#36a0ff"/><stop offset=".46" stop-color="#1d82e8"/><stop offset=".62" stop-color="#1a70c8"/><stop offset=".82" stop-color="#1761ae"/><stop offset="1" stop-color="#13508f"/>
            </linearGradient>
            <linearGradient id="g-nut" gradientUnits="userSpaceOnUse" x1="726" y1="440" x2="860" y2="472">
              <stop offset="0" stop-color="#1c88f4"/><stop offset=".35" stop-color="#2088f0"/><stop offset=".6" stop-color="#1a70c8"/><stop offset="1" stop-color="#14589f"/>
            </linearGradient>
            <linearGradient id="g-shank" gradientUnits="userSpaceOnUse" x1="740" y1="484" x2="811" y2="500">
              <stop offset="0" stop-color="#1874d4"/><stop offset=".35" stop-color="#2794ff"/><stop offset=".55" stop-color="#1d80e4"/><stop offset=".8" stop-color="#1763b0"/><stop offset="1" stop-color="#134f8e"/>
            </linearGradient>
          </defs>
          <g stroke="#0a2547" stroke-width="1" stroke-linejoin="round">
            <path d="M745 460L737 495C738 503 750 509 764 514C780 519 800 521 806 514L815 478z" fill="url(#g-shank)"/>
            <path d="M751 462L743 502M801 476L792 519" fill="none"/>
            <path d="M720 440C728 454 752 466 780 473C806 480 850 484 858 468L864 440z" fill="url(#g-nut)"/>
            <path d="M836 440L827 480" fill="none"/>
            <path d="M554 220L679 318L648 447L529 338z" fill="#1d8dfa"/>
            <path d="M679 318L1099 330L1064 442L648 447z" fill="#12589b"/>
            <path d="M554 220L953 242L1099 330L679 318z" fill="#1b79d6"/>
            <path d="M542 280L662 383L1081 387" fill="none"/>
            <path d="M774 200L759 260A76 19 14.100 0 0 906 297L921 234z" fill="url(#g-head)"/>
            <ellipse cx="847.500" cy="217" rx="76" ry="19" transform="rotate(14.100 847.500 217)" fill="#1b79d6"/>
            <ellipse cx="848" cy="217" rx="38" ry="9.500" transform="rotate(14.100 848 217)" fill="none"/>
            <path d="M809 191.500L891 243.500L875 304M908 220L784 213L770 272" fill="none"/>
          </g>
          <path d="M855.500 187L765 529" stroke="#2d6a3a" stroke-width="1.500" opacity=".6"/>
          <path d="M855.500 187L765 529" stroke="#f4f285" stroke-width="2.200" stroke-dasharray="3 3 2 3"/>
          <g class="axes">
            <path d="M301 351L294 388H332M294 388L281 372" fill="none" stroke="#c6e66a"/>
            <text x="301" y="348">Z</text>
            <text x="279" y="371">Y</text>
            <text x="335" y="389">X</text>
          </g>
          <g stroke="#c9c6ff" stroke-width="1.500" stroke-linejoin="round">
            <path d="M1195 119C1197 110 1204 105 1211.500 108L1207 125z" fill="#04046c"/>
            <path d="M1203 149L1208 127C1218 117 1234 126 1231 138C1230 143 1227 147 1224 149z" fill="#04046c"/>
            <path d="M1192 118L1226 130H1208L1210 122" fill="none"/>
            <path d="M1192 119L1215 137" fill="none"/>
          </g>
          <circle cx="1191.500" cy="118" r="2.500" fill="#cfd3ff"/>
          <path d="M1213 135h6v6h-6z" fill="#d01818"/>
          <g class="axes">
            <text x="1210" y="105">Z</text>
            <text x="1185" y="117">Y</text>
            <text x="1228" y="132">X</text>
          </g>
          <text class="corner" x="348" y="543">Z</text>
        </svg>
      </div>
    </div>
  </section>
</main>
</body>
</html>
```
FILE: styles.css
```css
* {
  box-sizing: border-box;
}

body {
  margin: 0;
  height: 100vh;
  display: flex;
  flex-direction: column;
  overflow: hidden;
  background: #f6f6f6;
  color: #111;
  font: 9px/14px Lato, "Open Sans", sans-serif;
}

button,
select {
  margin: 0;
  padding: 0;
  border: 0;
  background: none;
  color: inherit;
  font: inherit;
}

svg {
  display: block;
  flex: none;
}

.sprite {
  position: absolute;
  width: 0;
  height: 0;
}

/* Title bar */
.titlebar {
  display: flex;
  align-items: center;
  flex: none;
  height: 16px;
  padding: 0 10px 0 0;
  background: #fff;
}

.titlebar-logo {
  width: 10px;
  height: 10px;
  margin: 0 3px 0 2px;
}

.titlebar-text {
  margin: 0;
  font-size: 9px;
  font-weight: 400;
}

.winctl {
  display: flex;
  gap: 20px;
  margin-left: auto;
}

.winctl svg {
  width: 11px;
  height: 11px;
}

/* Menu bar */
.menubar {
  display: flex;
  align-items: center;
  gap: 10px;
  flex: none;
  height: 16px;
  padding: 0 3px;
  background: linear-gradient(90deg, #fafafa, #f0f0f0);
}

.menubar-icon {
  width: 10px;
  height: 10px;
  margin-right: -3px;
}

.menubar-help svg {
  width: 9px;
  height: 9px;
}

.mdictl {
  display: flex;
  gap: 6px;
  margin-left: auto;
}

.mdictl svg {
  width: 8px;
  height: 8px;
}

/* Toolbar */
.toolbar {
  display: flex;
  flex: none;
  height: 20px;
  border-top: 1px solid #d8d8d8;
  border-bottom: 1px solid #b4b4b4;
  background: #fbfbfb;
}

.group {
  display: flex;
  align-items: center;
  justify-content: space-around;
  padding-left: 5px;
  border-right: 1px solid #c4c4c4;
  background: repeating-linear-gradient(#9a9a9a 0 1px, transparent 1px 3px) 2px 3px / 1px 13px no-repeat;
}

.group button {
  display: grid;
  place-items: center;
  width: 17px;
  height: 18px;
}

.group svg {
  width: 14px;
  height: 14px;
}

.group-file { width: 110px; }
.group-windows { width: 216px; }
.group-colors { width: 145px; margin-left: 145px; }
.group-info { width: 25px; }
.group-select { width: 188px; }
.group-three { width: 58px; }
.group-two { width: 40px; }
.group-display { width: 145px; }
.group-last { border-right: 0; }

.group .active {
  background: #cfe4f6;
}

.group .drop {
  width: 10px;
}

.group .drop svg {
  width: 6px;
  height: 6px;
}

.rule {
  width: 1px;
  height: 12px;
  background: #b5b5b5;
}

/* Combo boxes */
.combo {
  display: flex;
  align-items: center;
  height: 16px;
  border: 1px solid #9a9a9a;
  background: #fff;
}

.combo select {
  flex: 1;
  min-width: 0;
  height: 14px;
  padding-left: 2px;
  appearance: none;
  outline: 0;
}

.combo .combo-arrow {
  width: 8px;
  height: 14px;
  border-left: 1px solid #b0b0b0;
  background: #e6e6e6;
}

.combo-icon {
  width: 11px;
  height: 11px;
  margin: 0 1px;
}

.combo-spin {
  width: 5px;
  height: 10px;
  margin-left: 1px;
}

.combo-colors { width: 97px; }
.combo-select { width: 78px; }
.combo-db { width: 148px; }
.combo-module { width: 75px; }
.combo-ctx { width: 66px; }

/* Workspace */
.workspace {
  display: flex;
  flex: 1;
  min-height: 0;
}

.side {
  display: flex;
  flex-direction: column;
  flex: none;
  width: 220px;
  padding-right: 4px;
  background: #fafafa;
}

.tabs {
  display: flex;
  align-items: flex-end;
  height: 22px;
  padding-left: 2px;
}

.tab {
  height: 16px;
  padding: 0 5px;
  border: 1px solid #dcdcdc;
  background: #efefef;
}

.tab-on {
  height: 18px;
  border-bottom: 0;
  background: #fff;
}

.dbrow {
  display: flex;
  align-items: center;
  height: 21px;
  padding-left: 3px;
  background: #fff;
}

.dbtools {
  display: flex;
  flex: 1;
  justify-content: space-around;
}

.dbtools svg {
  width: 11px;
  height: 11px;
}

.treebox {
  display: flex;
  flex: 1;
  min-height: 0;
  margin-left: 2px;
  border: 1px solid #a8a8a8;
  border-bottom: 0;
  background: #fff;
}

.tree {
  flex: 1;
  overflow: hidden;
}

.tree,
.tree ul {
  margin: 0;
  padding: 0;
  list-style: none;
  background: repeating-linear-gradient(#b4b4b4 0 2px, transparent 2px 4px) 5px 0 / 1px 100% no-repeat;
}

.tree ul {
  margin-left: 12px;
}

.tree .solo {
  background: none;
}

.row {
  display: flex;
  align-items: center;
  height: 14px;
  white-space: nowrap;
}

.row svg {
  width: 11px;
  height: 11px;
}

.row svg + span {
  margin-left: 2px;
}

.row .current {
  border-bottom: 1px solid #222;
  line-height: 11px;
}

.exp {
  width: 7px;
  height: 7px;
  margin: 0 3px 0 2px;
  border: 1px solid #b0b0b0;
  background:
    linear-gradient(#555, #555) 1px 2px / 3px 1px no-repeat,
    linear-gradient(#555, #555) 2px 1px / 1px 3px no-repeat,
    #fff;
}

.exp.minus {
  background: linear-gradient(#555, #555) 1px 2px / 3px 1px no-repeat, #fff;
}

.leaf::before {
  content: "";
  width: 5px;
  margin: 0 1px 0 6px;
  border-top: 1px dotted #a4a4a4;
}

.scroll {
  width: 11px;
  background: #cdcdcd;
}

.scroll button {
  display: grid;
  place-items: center;
  width: 100%;
  height: 11px;
  background: #f0f0f0;
}

.scroll svg {
  width: 8px;
  height: 8px;
}

/* Right side */
.stage {
  display: flex;
  flex-direction: column;
  flex: 1;
  min-width: 0;
}

.context {
  display: flex;
  align-items: center;
  flex: none;
  height: 21px;
  padding-left: 4px;
  background: linear-gradient(#fbfbfb, #ededed);
}

.context label {
  margin-right: 3px;
}

.context .combo {
  margin-right: 9px;
}

.canvasrow {
  display: flex;
  flex: 1;
  min-height: 0;
}

.toolbox {
  flex: none;
  width: 40px;
  background: linear-gradient(90deg, #fdfdfd, #ececec);
}

.pairs {
  display: grid;
  grid-template-columns: 19px 19px;
  grid-auto-rows: 19px;
  padding: 2px 0 1px;
  border-bottom: 1px solid #b8b8b8;
}

.pairs-tall {
  grid-auto-rows: 22px;
  padding: 1px 0 0;
  height: 177px;
}

.pairs-last {
  padding-top: 3px;
  border-bottom: 0;
}

.pairs button {
  display: grid;
  place-items: center;
}

.pairs svg {
  width: 14px;
  height: 14px;
}

.pairs .rp,
.pairs .xyz {
  display: flex;
  flex-direction: column;
  align-items: center;
  justify-content: center;
  font-family: "Liberation Sans", sans-serif;
  font-weight: 700;
}

.rp-text {
  align-self: flex-end;
  font-size: 7px;
  line-height: 8px;
}

.rp-x {
  color: #1a6598;
  font-size: 10px;
  line-height: 12px;
}

.pairs .xyz {
  font-size: 7px;
  line-height: 8px;
}

.pairs .xyz svg {
  width: 7px;
  height: 7px;
}

.viewport {
  flex: 1;
  min-width: 0;
  background: linear-gradient(#1b2d48 0%, #22344f 28%, #2a3c56 55%, #2f4059 69%, #3d4a64 76%, #505d72 84%, #66738c 93%, #76859f 100%);
}

.scene {
  width: 100%;
  height: 100%;
}

.axes text {
  fill: #c6e66a;
  font: 8px "Liberation Mono", monospace;
}

.corner {
  fill: #dfe5ee;
  font: italic 8px "Liberation Sans", sans-serif;
}
```
